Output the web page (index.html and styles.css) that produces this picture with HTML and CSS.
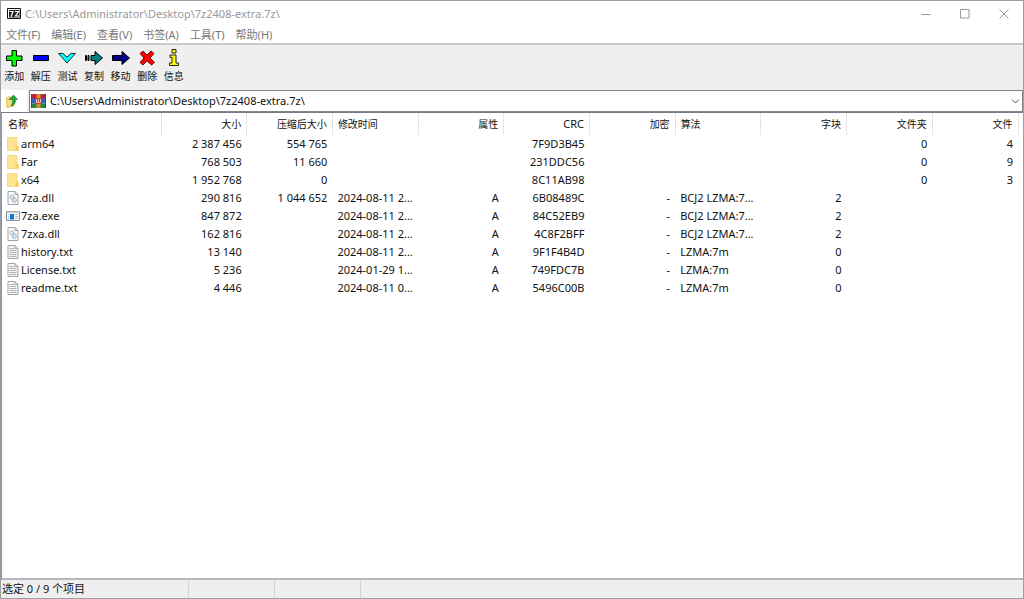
FILE: index.html
```html
<!DOCTYPE html>
<html lang="zh-CN">
<head>
<meta charset="utf-8">
<title>7-Zip</title>
<link rel="stylesheet" href="styles.css">
</head>
<body>
<svg class="defs" aria-hidden="true">
  <symbol id="folder" viewBox="0 0 14 14">
    <path d="M1.500 .5h9.500v8l1.500 1v4h-11z" fill="#ffe391" stroke="#f6d67a" stroke-width=".8"/>
    <path d="M9.500 8.500h2.500v5h-2.500z" fill="#f5cf62"/>
  </symbol>
  <symbol id="dll" viewBox="0 0 14 14">
    <path d="M2 .5h7l3 3v10H2z" fill="#fafafa" stroke="#a3a3a3"/>
    <path d="M9 .5v3h3" fill="none" stroke="#a3a3a3"/>
    <circle cx="6" cy="6" r="2" fill="#e6e9ec" stroke="#8e9aa5" stroke-dasharray="1.2 .5"/>
    <circle cx="8.300" cy="9.200" r="2.200" fill="#cfe3f3" stroke="#83a5c0" stroke-dasharray="1.2 .5"/>
  </symbol>
  <symbol id="exe" viewBox="0 0 14 14">
    <path d="M.5 2.500h13v9H.5z" fill="#f5f6f7" stroke="#8b949c"/>
    <path d="M1 2h12v1.500H1z" fill="#a8b0b7"/>
    <path d="M4 5h4v5.500H4z" fill="#0878dc"/>
    <path d="M2 5.500h1M2 7.500h1M2 9.500h1M9.500 5.500h2.500M9.500 7.500h2.500M9.500 9.500h2" stroke="#a9b5c0"/>
  </symbol>
  <symbol id="txt" viewBox="0 0 14 14">
    <path d="M2 .5h7l3 3v10H2z" fill="#f7f7f7" stroke="#a3a3a3"/>
    <path d="M9 .5v3h3" fill="none" stroke="#a3a3a3"/>
    <path d="M3.500 3.500h4.500M3.500 5.500h7M3.500 7.500h7M3.500 9.500h7M3.500 11.500h7" stroke="#b0b0b0"/>
  </symbol>
</svg>
<div class="window">
  <header class="titlebar">
    <svg class="app-icon" viewBox="0 0 14 11" aria-hidden="true">
      <path d="M.5 .5h13v10H.5z" fill="#fff" stroke="#111"/>
      <path d="M2 2h10.500v7.500H2z" fill="#222"/>
      <path d="M2.500 3.500h3.500L4 9M8 3.500h3.500L8.500 8h3.500" fill="none" stroke="#fff" stroke-width="1.200"/>
    </svg>
    <h1 class="title">C:\Users\Administrator\Desktop\7z2408-extra.7z\</h1>
    <div class="caption-buttons">
      <button class="caption" aria-label="最小化"><svg viewBox="0 0 10 10"><path d="M.5 5.500h9"/></svg></button>
      <button class="caption" aria-label="最大化"><svg viewBox="0 0 10 10"><path d="M.5 .5h8.500v8.500H.5z"/></svg></button>
      <button class="caption" aria-label="关闭"><svg viewBox="0 0 10 10"><path d="M.5 .5l9 9M9.500 .5l-9 9"/></svg></button>
    </div>
  </header>
  <nav class="menubar">
    <button>文件(F)</button>
    <button>编辑(E)</button>
    <button>查看(V)</button>
    <button>书签(A)</button>
    <button>工具(T)</button>
    <button>帮助(H)</button>
  </nav>
  <div class="toolbar">
    <button><svg viewBox="0 0 18 18"><path d="M7 1.500h4.500v5.500H17v4.500h-5.500V17H7v-5.500H1.500V7H7z" fill="#0f0" stroke="#000"/></svg>添加</button>
    <button><svg viewBox="0 0 18 18"><path d="M1.500 6.500h15v5h-15z" fill="#00f" stroke="#000"/></svg>解压</button>
    <button><svg viewBox="0 0 18 18"><path d="M.5 4.500h4.500L9 8l4-3.500h4.500L9 14z" fill="#0ff" stroke="#000" stroke-width=".8"/></svg>测试</button>
    <button><svg viewBox="0 0 18 18"><path d="M.5 6.500h1v5h-1zM3 6.500h1v5h-1zM6 6.500H10V2.500l7.500 6.500-7.500 6.500v-4H6z" fill="#008080" stroke="#000"/></svg>复制</button>
    <button><svg viewBox="0 0 18 18"><path d="M.5 6.500H10V2.500l7.500 6.500-7.500 6.500v-4H.5z" fill="#000080" stroke="#000"/></svg>移动</button>
    <button><svg viewBox="0 0 18 18"><path d="M2 4.500L5 2l4 4 4-4 3 2.500L12 9l4.500 4.500-3 2.500L9 12l-4 4-3-2.500L6 9z" fill="#f00" stroke="#400" stroke-width=".8"/></svg>删除</button>
    <button><svg viewBox="0 0 18 18"><path d="M7 .5h4v3.500H7zM5 6h6v8h2.500v2.500h-9V14H7V8.500H5z" fill="#ff0" stroke="#222"/></svg>信息</button>
  </div>
  <div class="address">
    <button class="up" aria-label="向上">
      <svg viewBox="0 0 14 14"><path d="M1.500 4l3-1.500L6 4h3v8l-7 1.500z" fill="#f9df7d" stroke="#d9b13c" stroke-width=".8"/><path d="M4 5.500L8.500 1 12.500 5.500h-2C10.500 9 9.500 11 6 12c1.500-2 2-4 1.500-6.500z" fill="#27a536" stroke="#187a25" stroke-width=".7"/></svg>
    </button>
    <div class="combo">
      <svg class="archive" viewBox="0 0 15 14" aria-hidden="true">
        <path d="M0 0h15v5H0z" fill="#b8283c"/><path d="M0 4.500h15v5H0z" fill="#3560c4"/><path d="M0 9.500h15V14H0z" fill="#278647"/>
        <path d="M.5 0v14M14.500 0v14" stroke="#444" stroke-width=".8"/>
        <path d="M5.500 0h4v14h-4z" fill="#dd8d2e"/>
        <path d="M4 4h7v6H4z" fill="#c8372c"/><path d="M5.500 5v3.500h4V5M7.500 5v3" fill="none" stroke="#fff0d0" stroke-width=".8"/>
      </svg>
      <input aria-label="路径" value="C:\Users\Administrator\Desktop\7z2408-extra.7z\">
      <button class="drop" aria-label="展开"><svg viewBox="0 0 9 9"><path d="M1 2.500l3.500 3.500L8 2.500" fill="none" stroke="#555"/></svg></button>
    </div>
  </div>
  <main class="list">
    <table>
      <colgroup><col class="c-name"><col span="10"><col class="c-end"></colgroup>
      <thead><tr><th class="l">名称</th><th>大小</th><th>压缩后大小</th><th class="l">修改时间</th><th>属性</th><th class="n">CRC</th><th>加密</th><th class="l">算法</th><th>字块</th><th>文件夹</th><th>文件</th><td></td></tr></thead>
      <tbody>
        <tr><td class="l name"><svg><use href="#folder"/></svg>arm64</td><td>2 387 456</td><td>554 765</td><td></td><td></td><td>7F9D3B45</td><td></td><td></td><td></td><td>0</td><td>4</td><td></td></tr>
        <tr><td class="l name"><svg><use href="#folder"/></svg>Far</td><td>768 503</td><td>11 660</td><td></td><td></td><td>231DDC56</td><td></td><td></td><td></td><td>0</td><td>9</td><td></td></tr>
        <tr><td class="l name"><svg><use href="#folder"/></svg>x64</td><td>1 952 768</td><td>0</td><td></td><td></td><td>8C11AB98</td><td></td><td></td><td></td><td>0</td><td>3</td><td></td></tr>
        <tr><td class="l name"><svg><use href="#dll"/></svg>7za.dll</td><td>290 816</td><td>1 044 652</td><td class="l">2024-08-11 2...</td><td>A</td><td>6B08489C</td><td>-</td><td class="l">BCJ2 LZMA:7...</td><td>2</td><td></td><td></td><td></td></tr>
        <tr><td class="l name"><svg><use href="#exe"/></svg>7za.exe</td><td>847 872</td><td></td><td class="l">2024-08-11 2...</td><td>A</td><td>84C52EB9</td><td>-</td><td class="l">BCJ2 LZMA:7...</td><td>2</td><td></td><td></td><td></td></tr>
        <tr><td class="l name"><svg><use href="#dll"/></svg>7zxa.dll</td><td>162 816</td><td></td><td class="l">2024-08-11 2...</td><td>A</td><td>4C8F2BFF</td><td>-</td><td class="l">BCJ2 LZMA:7...</td><td>2</td><td></td><td></td><td></td></tr>
        <tr><td class="l name"><svg><use href="#txt"/></svg>history.txt</td><td>13 140</td><td></td><td class="l">2024-08-11 2...</td><td>A</td><td>9F1F4B4D</td><td>-</td><td class="l">LZMA:7m</td><td>0</td><td></td><td></td><td></td></tr>
        <tr><td class="l name"><svg><use href="#txt"/></svg>License.txt</td><td>5 236</td><td></td><td class="l">2024-01-29 1...</td><td>A</td><td>749FDC7B</td><td>-</td><td class="l">LZMA:7m</td><td>0</td><td></td><td></td><td></td></tr>
        <tr><td class="l name"><svg><use href="#txt"/></svg>readme.txt</td><td>4 446</td><td></td><td class="l">2024-08-11 0...</td><td>A</td><td>5496C00B</td><td>-</td><td class="l">LZMA:7m</td><td>0</td><td></td><td></td><td></td></tr>
      </tbody>
    </table>
  </main>
  <footer class="status"><span class="summary">选定 0 / 9 个项目</span><span></span><span></span></footer>
</div>
</body>
</html>
```
FILE: styles.css
```css
* { box-sizing: border-box; }
body {
  margin: 0;
  color: #111;
  font: 11px/18px "Noto Sans", "Noto Sans CJK SC", sans-serif;
}
button, input {
  margin: 0;
  padding: 0;
  border: 0;
  background: none;
  color: inherit;
  font: inherit;
}
svg { display: block; }
.defs { position: absolute; width: 0; height: 0; }
.window {
  display: flex;
  flex-direction: column;
  min-height: 100vh;
  border: 1px solid #9a9ca6;
  background: #efefef;
}
.titlebar {
  display: flex;
  align-items: center;
  height: 25px;
  padding-left: 6px;
  background: #fff;
  color: #999;
}
.app-icon { width: 14px; height: 11px; margin-right: 4px; }
.title { flex: 1; margin: 0; font-size: 11px; font-weight: 400; }
.caption-buttons { display: flex; }
.caption {
  display: flex;
  align-items: center;
  justify-content: center;
  width: 39px;
  height: 24px;
}
.caption svg { width: 10px; height: 10px; fill: none; stroke: #999; }
.menubar {
  display: flex;
  gap: 11px;
  height: 19px;
  padding-left: 5px;
  border-bottom: 2px solid #c9c9c9;
  background: #fff;
  color: #777;
}
.toolbar { display: flex; width: 186px; height: 45px; padding-top: 4px; }
.toolbar button {
  display: flex;
  flex: 1;
  flex-direction: column;
  align-items: center;
  font-size: 10px;
}
.toolbar svg { width: 18px; height: 18px; }
.address {
  display: flex;
  gap: 2px;
  height: 22px;
}
.up {
  display: flex;
  align-items: center;
  width: 26px;
  padding-left: 4px;
  background: #fff;
}
.up svg { width: 14px; height: 14px; }
.combo {
  display: flex;
  flex: 1;
  align-items: center;
  border: 1px solid #858585;
  background: #fff;
}
.archive { width: 15px; height: 14px; margin: 0 4px 0 1px; }
.combo input { flex: 1; outline: 0; }
.drop { width: 14px; }
.drop svg { width: 9px; height: 9px; margin: auto; }
.list {
  flex: 1;
  border-top: 1px solid #777b86;
  border-bottom: 2px solid #b5b6be;
  border-left: 1px solid #8f929b;
  background: #fff;
}
table { width: 100%; border-collapse: collapse; table-layout: fixed; }
.c-name { width: 159px; }
.c-end { width: 5px; }
th, td {
  height: 18px;
  padding: 0 5px;
  line-height: 18px;
  text-align: right;
  white-space: nowrap;
}
td:last-child { padding: 0; }
th {
  height: 22px;
  border-right: 1px solid #e3e3e3;
  font-size: 10px;
  font-weight: 400;
}
.n { font-size: 11px; }
.l { text-align: left; }
th:first-child { padding-left: 6px; }
.name { display: flex; align-items: center; gap: 1px; padding-left: 4px; }
.name svg { width: 14px; height: 14px; }
.status {
  display: flex;
  height: 18px;
}
.status span { width: 86px; border-right: 1px solid #d4d4d4; }
.status .summary { width: 188px; padding-left: 1px; }
```
